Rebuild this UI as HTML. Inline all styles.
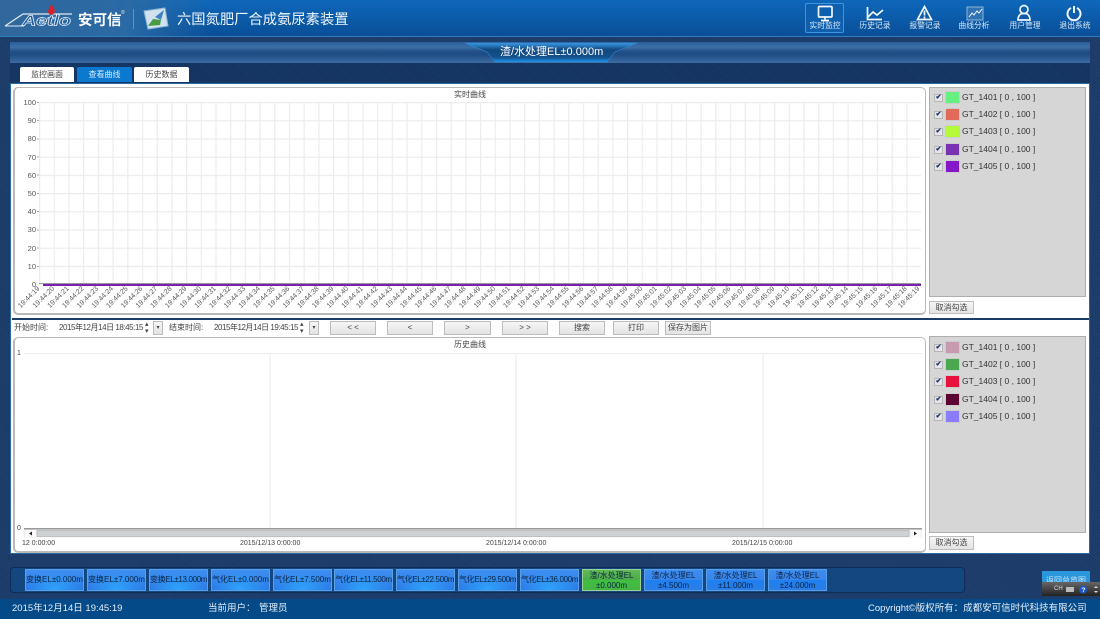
<!DOCTYPE html>
<html><head><meta charset="utf-8"><style>
*{box-sizing:border-box}
html,body{margin:0;padding:0;width:1100px;height:619px;overflow:hidden}
body{position:relative;background:#1c3b6c repeating-linear-gradient(45deg,#1a3765 0 1px,#21426f 1px 2px);font-family:"Liberation Sans","Noto Sans CJK SC",sans-serif;color:#333}
div,span{position:absolute}
#hd{left:0;top:0;width:1100px;height:37px;background:linear-gradient(#0e67ba 0,#0b5aa8 55%,#0a4f98 100%);border-bottom:1px solid #2f7dbd}
#hd2{left:0;top:0;width:210px;height:36px;background:linear-gradient(100deg,#31679b 0,#2a6aa5 60%,rgba(20,90,160,0) 100%)}
.nav{top:21px;width:44px;text-align:center;color:#dbe9f7;font-size:7.800px;line-height:10px;white-space:nowrap}
#tt{left:10px;top:42px;width:1080px;height:21px;background:linear-gradient(#2a5f99 0,#3c6fa6 25%,#214f86 45%,#1e4c84 60%,#39689f 95%,#3d6da5 100%)}
#band{left:10px;top:63px;width:1080px;height:20px;background:#14335f repeating-linear-gradient(45deg,#12305c 0 1px,#1a3a68 1px 2px)}
#ttl{left:500px;top:45px;width:102px;text-align:center;color:#fff;font-size:11px;line-height:15px;white-space:nowrap}
.tab{top:67px;height:15px;background:#fff;border-radius:2px 2px 0 0;font-size:8px;line-height:15px;text-align:center;color:#444}
#main{left:10px;top:83px;width:1080px;height:471px;background:#fff;border:1px solid #2a6a9e}
.box{background:#fff;border:1px solid #b9b9b9;border-radius:5px;border-left-width:2px;border-bottom-width:2px}
.leg{left:929px;width:157px;background:#d6d6d6;border:1px solid #aeaeae}
.it{height:13px;width:150px;font-size:8.500px;line-height:13px;color:#333;white-space:nowrap}
.cb{left:0;top:3px;width:9px;height:8px;background:#e4e4ea;border:1px solid #b5b5b5;color:#123066;font-size:7px;line-height:6px;text-align:center;font-weight:bold}
.sw{left:11px;top:0;width:15px;height:13px;border:1px solid #ccc}
.lb{left:28px;top:0}
.btn{background:linear-gradient(#f6f6f6,#e3e3e3);border:1px solid #bdbdbd;font-size:8px;text-align:center;color:#444;line-height:12px;white-space:nowrap}
.t8{font-size:8px;color:#444;white-space:nowrap;line-height:12px}
.dt{letter-spacing:-.45px}
#dock{left:10px;top:567px;width:955px;height:26px;background:#14477f;border:1px solid #0e2c55;border-radius:4px}
.b{top:569px;width:59px;height:22px;background:radial-gradient(ellipse at 50% 95%,#2ea2fb 0,rgba(46,162,251,0) 70%),linear-gradient(#3f8ef0,#2a7be6);border:1px solid #5b9fe6;color:#0b2444;font-size:8px;line-height:20px;text-align:center;white-space:nowrap;overflow:hidden}
.l{letter-spacing:-.35px}
.b2{line-height:10px;padding-top:1px;background:linear-gradient(#3d8cf0 0,#3a86ea 48%,#1e7ff0 52%,#2c7ee6 100%)}
.g{background:linear-gradient(#5fbb55 0,#4cab48 48%,#3fc040 52%,#46b444 100%);border-color:#9ccf98}
#ft{left:0;top:599px;width:1100px;height:20px;background:#044a89;color:#e6eef7;font-size:9.500px;line-height:20px;white-space:nowrap}
#ft span{top:0;white-space:nowrap}
</style></head><body>
<div id="hd"></div><div id="hd2"></div>
<svg style="position:absolute;left:0;top:0" width="380" height="37">
<path d="M5 26 L23 14 H72" fill="none" stroke="#dfe9f3" stroke-width="1.300"/>
<path d="M5 26 H24" fill="none" stroke="#dfe9f3" stroke-width="1"/>
<text x="22" y="25.500" font-family="Liberation Sans" font-style="italic" font-weight="bold" font-size="15" fill="#1e5d9c" stroke="#e4eef8" stroke-width=".7" textLength="49" lengthAdjust="spacingAndGlyphs">Aetlo</text>
<path d="M51 4 C54 8 55.500 10 54.500 13 C52 16 48 15 48 11 C49 9 50 7 51 4Z" fill="#d8202a"/>
<text x="78" y="25" font-size="14.500" font-weight="bold" fill="#fff" font-family="Liberation Sans,Noto Sans CJK SC,sans-serif">安可信</text>
<text x="121" y="14" font-size="5" fill="#dfe9f3" font-family="Liberation Sans">®</text>
<line x1="133.500" y1="9" x2="133.500" y2="29" stroke="#5a93c6"/>
<path d="M144 11 L165 8 L168 26 L148 29Z" fill="#cfe2ee" stroke="#8fb6d3"/>
<path d="M148 26 L153 19 L161 20 L160 25Z" fill="#4a9a44"/>
<path d="M155 17 L164 10 L161 20Z" fill="#3f82bd"/>
<text x="177" y="24" font-size="14.300" fill="#eef5fb" font-family="Liberation Sans,Noto Sans CJK SC,sans-serif">六国氮肥厂合成氨尿素装置</text>
</svg>
<div style="left:805px;top:3px;width:39px;height:30px;border:1px solid #3b95e0;border-radius:2px;background:#0e5fae"></div>
<svg style="position:absolute;left:780px;top:0" width="320" height="24" fill="none" stroke="#f2f7fc" stroke-width="1.700">
<rect x="38.500" y="6.500" width="13.500" height="10.500" rx="1"/><path d="M45 17v2.500M41 20.500h8" />
<path d="M87.500 7V19.500H102M88 17l5-5 4 3 6-5"/>
<path d="M144.500 6.500L137.500 19.500H151.500Z"/><path d="M144.500 10.500v5M144.500 16.500v2"/>
<rect x="187" y="7" width="16" height="13" fill="#2f73b4" stroke="#8fb6d8" stroke-width="1"/><path d="M189 17l3-4 2 2 3-4 2 2 3-4" stroke-width="1"/>
<circle cx="244" cy="9.500" r="4"/><path d="M238 20c0-4 2-6 4-6.500h4c2 .5 4 2.500 4 6.500Z"/>
<path d="M291 8a6.500 6.500 0 1 0 6 0M294 6v7" stroke-width="2"/>
</svg>
<div class="nav" style="left:803px">实时监控</div>
<div class="nav" style="left:853px">历史记录</div>
<div class="nav" style="left:903px">报警记录</div>
<div class="nav" style="left:952px">曲线分析</div>
<div class="nav" style="left:1003px">用户管理</div>
<div class="nav" style="left:1053px">退出系统</div>

<div id="tt"></div><div id="band"></div>
<svg style="position:absolute;left:465px;top:42px" width="172" height="21">
<defs><linearGradient id="tg" x1="0" y1="0" x2="0" y2="1"><stop offset="0" stop-color="#3a98e4"/><stop offset=".35" stop-color="#12497f"/><stop offset=".75" stop-color="#14508c"/><stop offset="1" stop-color="#1c95ec"/></linearGradient></defs>
<path d="M0 1H172L150 10L142 20H30L22 10Z" fill="url(#tg)" stroke="#2f8ad8" stroke-width=".6"/>
</svg>
<div id="ttl">渣/水处理EL±0.000m</div>
<div class="tab" style="left:20px;width:54px">监控画面</div>
<div class="tab" style="left:77px;width:55px;background:#0b79cf;color:#d6ecfb">查看曲线</div>
<div class="tab" style="left:134px;width:55px">历史数据</div>

<div id="main"></div>
<div class="box" style="left:13px;top:87px;width:913px;height:228px"></div>
<div style="left:12px;top:318px;width:1077px;height:2px;background:#1b3d6b"></div>
<div class="box" style="left:13px;top:337px;width:913px;height:216px"></div>

<svg style="position:absolute;left:0;top:85px" width="930" height="232" font-family="Liberation Sans,sans-serif" font-size="7.500" fill="#555">
<defs><pattern id="gv" width="14.700" height="18.200" patternUnits="userSpaceOnUse" x="39" y="17"><path d="M.6 0V18.200M0 .6H14.700" stroke="#ececec" stroke-width="1.200" fill="none"/></pattern></defs>
<rect x="39" y="17" width="882" height="182" fill="url(#gv)"/>
<path d="M37 17.500h2M37 35.500h2M37 54h2M37 72h2M37 90h2M37 108.500h2M37 126.500h2M37 145h2M37 163h2M37 181.500h2" stroke="#aaa"/>
<g text-anchor="end"><text x="36" y="20">100</text><text x="36" y="38">90</text><text x="36" y="56">80</text><text x="36" y="75">70</text><text x="36" y="93">60</text><text x="36" y="111">50</text><text x="36" y="129">40</text><text x="36" y="147">30</text><text x="36" y="166">20</text><text x="36" y="184">10</text><text x="36" y="202">0</text></g>
<rect x="39" y="198" width="882" height="1" fill="#999"/>
<rect x="43" y="199" width="878" height="2" fill="#7c1fb0"/>
<g font-size="7" text-anchor="end" fill="#555">
<text transform="translate(40,204) rotate(-45)">19:44:19</text>
<text transform="translate(54.700,204) rotate(-45)">19:44:20</text>
<text transform="translate(69.400,204) rotate(-45)">19:44:21</text>
<text transform="translate(84.100,204) rotate(-45)">19:44:22</text>
<text transform="translate(98.800,204) rotate(-45)">19:44:23</text>
<text transform="translate(113.500,204) rotate(-45)">19:44:24</text>
<text transform="translate(128.200,204) rotate(-45)">19:44:25</text>
<text transform="translate(142.900,204) rotate(-45)">19:44:26</text>
<text transform="translate(157.600,204) rotate(-45)">19:44:27</text>
<text transform="translate(172.300,204) rotate(-45)">19:44:28</text>
<text transform="translate(187,204) rotate(-45)">19:44:29</text>
<text transform="translate(201.700,204) rotate(-45)">19:44:30</text>
<text transform="translate(216.400,204) rotate(-45)">19:44:31</text>
<text transform="translate(231.100,204) rotate(-45)">19:44:32</text>
<text transform="translate(245.800,204) rotate(-45)">19:44:33</text>
<text transform="translate(260.500,204) rotate(-45)">19:44:34</text>
<text transform="translate(275.200,204) rotate(-45)">19:44:35</text>
<text transform="translate(289.900,204) rotate(-45)">19:44:36</text>
<text transform="translate(304.600,204) rotate(-45)">19:44:37</text>
<text transform="translate(319.300,204) rotate(-45)">19:44:38</text>
<text transform="translate(334,204) rotate(-45)">19:44:39</text>
<text transform="translate(348.700,204) rotate(-45)">19:44:40</text>
<text transform="translate(363.400,204) rotate(-45)">19:44:41</text>
<text transform="translate(378.100,204) rotate(-45)">19:44:42</text>
<text transform="translate(392.800,204) rotate(-45)">19:44:43</text>
<text transform="translate(407.500,204) rotate(-45)">19:44:44</text>
<text transform="translate(422.200,204) rotate(-45)">19:44:45</text>
<text transform="translate(436.900,204) rotate(-45)">19:44:46</text>
<text transform="translate(451.600,204) rotate(-45)">19:44:47</text>
<text transform="translate(466.300,204) rotate(-45)">19:44:48</text>
<text transform="translate(481,204) rotate(-45)">19:44:49</text>
<text transform="translate(495.700,204) rotate(-45)">19:44:50</text>
<text transform="translate(510.400,204) rotate(-45)">19:44:51</text>
<text transform="translate(525.100,204) rotate(-45)">19:44:52</text>
<text transform="translate(539.800,204) rotate(-45)">19:44:53</text>
<text transform="translate(554.500,204) rotate(-45)">19:44:54</text>
<text transform="translate(569.200,204) rotate(-45)">19:44:55</text>
<text transform="translate(583.900,204) rotate(-45)">19:44:56</text>
<text transform="translate(598.600,204) rotate(-45)">19:44:57</text>
<text transform="translate(613.300,204) rotate(-45)">19:44:58</text>
<text transform="translate(628,204) rotate(-45)">19:44:59</text>
<text transform="translate(642.700,204) rotate(-45)">19:45:00</text>
<text transform="translate(657.400,204) rotate(-45)">19:45:01</text>
<text transform="translate(672.100,204) rotate(-45)">19:45:02</text>
<text transform="translate(686.800,204) rotate(-45)">19:45:03</text>
<text transform="translate(701.500,204) rotate(-45)">19:45:04</text>
<text transform="translate(716.200,204) rotate(-45)">19:45:05</text>
<text transform="translate(730.900,204) rotate(-45)">19:45:06</text>
<text transform="translate(745.600,204) rotate(-45)">19:45:07</text>
<text transform="translate(760.300,204) rotate(-45)">19:45:08</text>
<text transform="translate(775,204) rotate(-45)">19:45:09</text>
<text transform="translate(789.700,204) rotate(-45)">19:45:10</text>
<text transform="translate(804.400,204) rotate(-45)">19:45:11</text>
<text transform="translate(819.100,204) rotate(-45)">19:45:12</text>
<text transform="translate(833.800,204) rotate(-45)">19:45:13</text>
<text transform="translate(848.500,204) rotate(-45)">19:45:14</text>
<text transform="translate(863.200,204) rotate(-45)">19:45:15</text>
<text transform="translate(877.900,204) rotate(-45)">19:45:16</text>
<text transform="translate(892.600,204) rotate(-45)">19:45:17</text>
<text transform="translate(907.300,204) rotate(-45)">19:45:18</text>
<text transform="translate(920,204) rotate(-45)">19:45:19</text>
</g>
</svg>
<div class="t8" style="left:440px;top:89px;width:60px;text-align:center">实时曲线</div>

<div class="leg" style="top:87px;height:210px"></div>
<div class="it" style="left:934px;top:91px"><span class="cb">✔</span><span class="sw" style="background:#66f082"></span><span class="lb">GT_1401 [ 0 , 100 ]</span></div>
<div class="it" style="left:934px;top:108px"><span class="cb">✔</span><span class="sw" style="background:#e26a58"></span><span class="lb">GT_1402 [ 0 , 100 ]</span></div>
<div class="it" style="left:934px;top:125px"><span class="cb">✔</span><span class="sw" style="background:#b4fa3a"></span><span class="lb">GT_1403 [ 0 , 100 ]</span></div>
<div class="it" style="left:934px;top:143px"><span class="cb">✔</span><span class="sw" style="background:#7a32b4"></span><span class="lb">GT_1404 [ 0 , 100 ]</span></div>
<div class="it" style="left:934px;top:160px"><span class="cb">✔</span><span class="sw" style="background:#8418c8"></span><span class="lb">GT_1405 [ 0 , 100 ]</span></div>
<div class="btn" style="left:929px;top:301px;width:45px;height:13px">取消勾选</div>

<div class="t8" style="left:14px;top:322px">开始时间:</div>
<div class="t8 dt" style="left:59px;top:322px">2015年12月14日 18:45:15</div>
<div class="t8" style="left:145px;top:321px;font-size:7px;line-height:7px">▴<br>▾</div>
<div class="btn" style="left:153px;top:321px;width:10px;height:14px;font-size:6px">▾</div>
<div class="t8" style="left:169px;top:322px">结束时间:</div>
<div class="t8 dt" style="left:214px;top:322px">2015年12月14日 19:45:15</div>
<div class="t8" style="left:300px;top:321px;font-size:7px;line-height:7px">▴<br>▾</div>
<div class="btn" style="left:309px;top:321px;width:10px;height:14px;font-size:6px">▾</div>
<div class="btn" style="left:330px;top:321px;width:46px;height:14px">&lt; &lt;</div>
<div class="btn" style="left:387px;top:321px;width:46px;height:14px">&lt;</div>
<div class="btn" style="left:444px;top:321px;width:47px;height:14px">&gt;</div>
<div class="btn" style="left:502px;top:321px;width:46px;height:14px">&gt; &gt;</div>
<div class="btn" style="left:559px;top:321px;width:46px;height:14px">搜索</div>
<div class="btn" style="left:613px;top:321px;width:46px;height:14px">打印</div>
<div class="btn" style="left:665px;top:321px;width:46px;height:14px">保存为图片</div>

<div class="t8" style="left:440px;top:339px;width:60px;text-align:center">历史曲线</div>
<svg style="position:absolute;left:14px;top:345px" width="912" height="205" font-family="Liberation Sans,sans-serif" font-size="7" fill="#444">
<rect x="10" y="8" width="898" height="1" fill="#ececec"/>
<path d="M256 8V192M502 8V192M749 8V192" stroke="#e8e8e8"/>
<text x="3" y="10">1</text><text x="3" y="185">0</text>
<rect x="10" y="183" width="898" height="1.500" fill="#999"/>
<rect x="10" y="184.500" width="898" height="8" fill="#f0f0f0"/>
<rect x="23" y="185.500" width="872" height="6" fill="#cfd2d5" stroke="#aaa" stroke-width=".6"/>
<rect x="12" y="185" width="10" height="7" fill="#fafafa"/>
<rect x="897" y="185" width="10" height="7" fill="#fafafa"/>
<path d="M15 188.500l3-2v4zM903 188.500l-3-2v4z" fill="#222"/>
<text x="8" y="200">12 0:00:00</text><text x="226" y="200">2015/12/13 0:00:00</text><text x="472" y="200">2015/12/14 0:00:00</text><text x="718" y="200">2015/12/15 0:00:00</text>
</svg>

<div class="leg" style="top:336px;height:197px"></div>
<div class="it" style="left:934px;top:341px"><span class="cb">✔</span><span class="sw" style="background:#c89ab0"></span><span class="lb">GT_1401 [ 0 , 100 ]</span></div>
<div class="it" style="left:934px;top:358px"><span class="cb">✔</span><span class="sw" style="background:#4aa84e"></span><span class="lb">GT_1402 [ 0 , 100 ]</span></div>
<div class="it" style="left:934px;top:375px"><span class="cb">✔</span><span class="sw" style="background:#e8103c"></span><span class="lb">GT_1403 [ 0 , 100 ]</span></div>
<div class="it" style="left:934px;top:393px"><span class="cb">✔</span><span class="sw" style="background:#5c0434"></span><span class="lb">GT_1404 [ 0 , 100 ]</span></div>
<div class="it" style="left:934px;top:410px"><span class="cb">✔</span><span class="sw" style="background:#8a7cfa"></span><span class="lb">GT_1405 [ 0 , 100 ]</span></div>
<div class="btn" style="left:929px;top:536px;width:45px;height:14px">取消勾选</div>

<div id="dock"></div>
<div class="b" style="left:25px">变换EL±0.000m</div>
<div class="b" style="left:87px">变换EL±7.000m</div>
<div class="b l" style="left:149px">变换EL±13.000m</div>
<div class="b" style="left:211px">气化EL±0.000m</div>
<div class="b" style="left:273px">气化EL±7.500m</div>
<div class="b l" style="left:334px">气化EL±11.500m</div>
<div class="b l" style="left:396px">气化EL±22.500m</div>
<div class="b l" style="left:458px">气化EL±29.500m</div>
<div class="b l" style="left:520px">气化EL±36.000m</div>
<div class="b b2 g" style="left:582px">渣/水处理EL<br>±0.000m</div>
<div class="b b2" style="left:644px">渣/水处理EL<br>±4.500m</div>
<div class="b b2" style="left:706px">渣/水处理EL<br>±11.000m</div>
<div class="b b2" style="left:768px">渣/水处理EL<br>±24.000m</div>
<div style="left:1042px;top:571px;width:48px;height:14px;background:#2a96dc;color:#cfe8fa;font-size:8px;text-align:center;line-height:20px;overflow:hidden;white-space:nowrap">返回总览图</div>
<div style="left:1042px;top:582px;width:58px;height:14px;background:linear-gradient(#666,#222);color:#ddd;font-size:6px;line-height:14px;padding-left:12px">CH</div>
<svg style="position:absolute;left:1064px;top:584px" width="36" height="11"><rect x="2" y="3" width="8" height="5" fill="#bbb"/><circle cx="19" cy="5.500" r="4" fill="#1d5ac8"/><text x="17.500" y="8" font-size="6.500" font-weight="bold" fill="#fff" font-family="Liberation Sans">?</text><path d="M30 4l2-2 2 2zM30 7l2 2 2-2z" fill="#ddd"/></svg>

<div id="ft"><span style="left:12px">2015年12月14日 19:45:19</span><span style="left:208px">当前用户：</span><span style="left:259px">管理员</span><span style="left:868px">Copyright©版权所有：成都安可信时代科技有限公司</span></div>
</body></html>
